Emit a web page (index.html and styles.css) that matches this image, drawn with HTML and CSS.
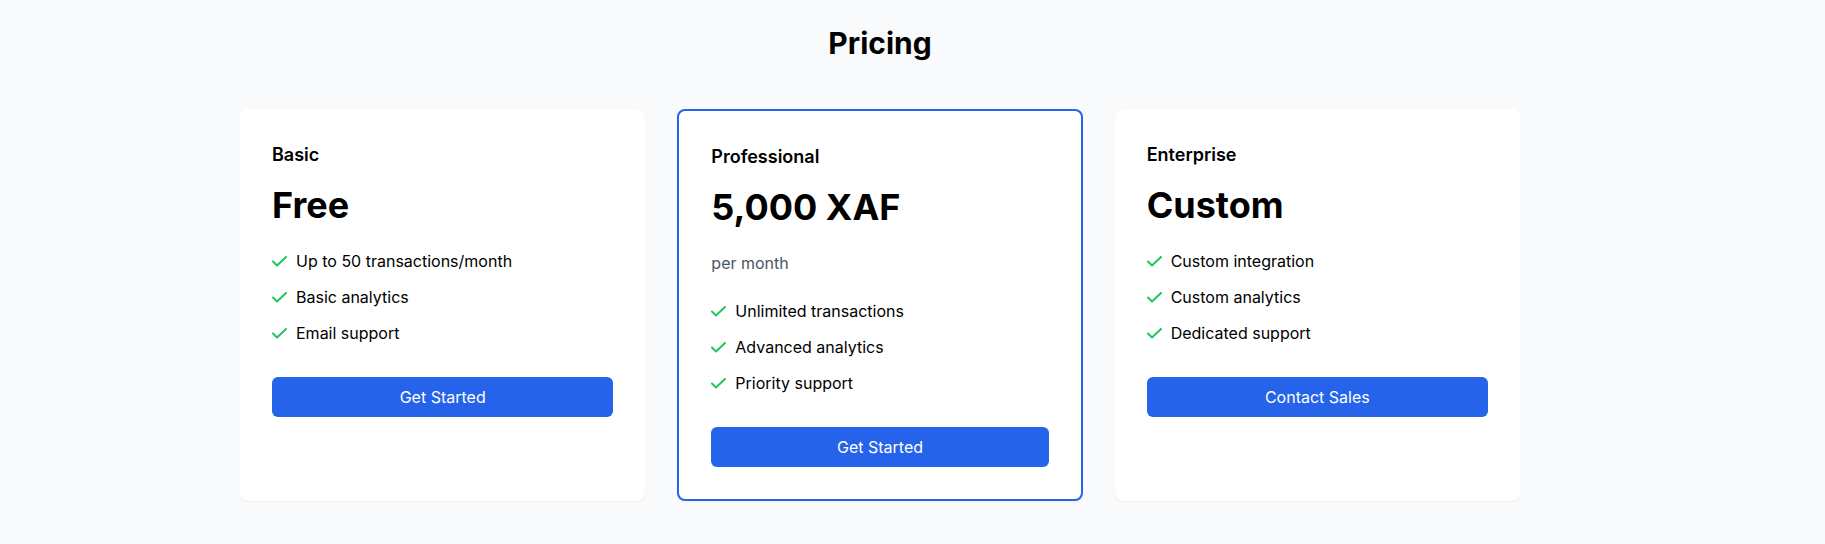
FILE: index.html
```html
<!DOCTYPE html>
<html lang="en">
<head>
<meta charset="utf-8">
<title>Pricing</title>
<link rel="stylesheet" href="styles.css">
</head>
<body>
<div class="page">
  <section class="pricing">
    <h2 class="pricing-title">Pricing</h2>
    <div class="plans">
      <div class="plan">
        <h3 class="plan-name">Basic</h3>
        <div class="plan-price">Free</div>
        <ul class="features">
          <li><svg class="check" viewBox="0 0 16 11" width="16" height="11"><polyline points="1,5.5 5,9.5 14,1" /></svg>Up to 50 transactions/month</li>
          <li><svg class="check" viewBox="0 0 16 11" width="16" height="11"><polyline points="1,5.5 5,9.5 14,1" /></svg>Basic analytics</li>
          <li><svg class="check" viewBox="0 0 16 11" width="16" height="11"><polyline points="1,5.5 5,9.5 14,1" /></svg>Email support</li>
        </ul>
        <button class="plan-button">Get Started</button>
      </div>
      <div class="plan plan-featured">
        <h3 class="plan-name">Professional</h3>
        <div class="plan-price">5,000 XAF</div>
        <p class="plan-period">per month</p>
        <ul class="features">
          <li><svg class="check" viewBox="0 0 16 11" width="16" height="11"><polyline points="1,5.5 5,9.5 14,1" /></svg>Unlimited transactions</li>
          <li><svg class="check" viewBox="0 0 16 11" width="16" height="11"><polyline points="1,5.5 5,9.5 14,1" /></svg>Advanced analytics</li>
          <li><svg class="check" viewBox="0 0 16 11" width="16" height="11"><polyline points="1,5.5 5,9.5 14,1" /></svg>Priority support</li>
        </ul>
        <button class="plan-button">Get Started</button>
      </div>
      <div class="plan">
        <h3 class="plan-name">Enterprise</h3>
        <div class="plan-price">Custom</div>
        <ul class="features">
          <li><svg class="check" viewBox="0 0 16 11" width="16" height="11"><polyline points="1,5.5 5,9.5 14,1" /></svg>Custom integration</li>
          <li><svg class="check" viewBox="0 0 16 11" width="16" height="11"><polyline points="1,5.5 5,9.5 14,1" /></svg>Custom analytics</li>
          <li><svg class="check" viewBox="0 0 16 11" width="16" height="11"><polyline points="1,5.5 5,9.5 14,1" /></svg>Dedicated support</li>
        </ul>
        <button class="plan-button">Contact Sales</button>
      </div>
    </div>
  </section>
</div>
</body>
</html>
```
FILE: styles.css
```css
* { box-sizing: border-box; }
html, body {
  margin: 0;
  padding: 0;
  background: #f9fafb;
  font-family: Inter, "Liberation Sans", Arial, sans-serif;
  color: #000;
}
.page {
  width: 1760px;
  padding-top: 25px;
  padding-bottom: 40px;
}
.pricing {
  max-width: 1280px;
  margin: 0 auto;
}
.pricing-title {
  margin: 0 0 48px;
  font-size: 30px;
  line-height: 36px;
  font-weight: 700;
  text-align: center;
}
.plans {
  display: grid;
  grid-template-columns: repeat(3, 1fr);
  gap: 32px;
}
.plan {
  background: #fff;
  border-radius: 8px;
  padding: 32px;
  box-shadow: 0 1px 2px rgba(0, 0, 0, 0.05);
}
.plan-featured {
  border: 2px solid #2563eb;
}
.plan-name {
  margin: 0 0 16px;
  font-size: 18px;
  line-height: 28px;
  font-weight: 600;
}
.plan-price {
  font-size: 36px;
  line-height: 40px;
  font-weight: 700;
  margin-bottom: 24px;
}
.plan-period {
  margin: 0 0 24px;
  font-size: 16px;
  line-height: 24px;
  color: #4b5563;
}
.features {
  list-style: none;
  margin: 0 0 32px;
  padding: 0;
  display: flex;
  flex-direction: column;
  gap: 12px;
}
.features li {
  display: flex;
  align-items: center;
  gap: 8px;
  font-size: 16px;
  line-height: 24px;
}
.check {
  flex: none;
  fill: none;
  stroke: #22c55e;
  stroke-width: 2;
  stroke-linecap: round;
  stroke-linejoin: round;
}
.plan-button {
  display: block;
  width: 100%;
  height: 40px;
  border: none;
  border-radius: 6px;
  background: #2563eb;
  color: #fff;
  font-family: inherit;
  font-size: 16px;
  line-height: 24px;
  cursor: pointer;
}
```
